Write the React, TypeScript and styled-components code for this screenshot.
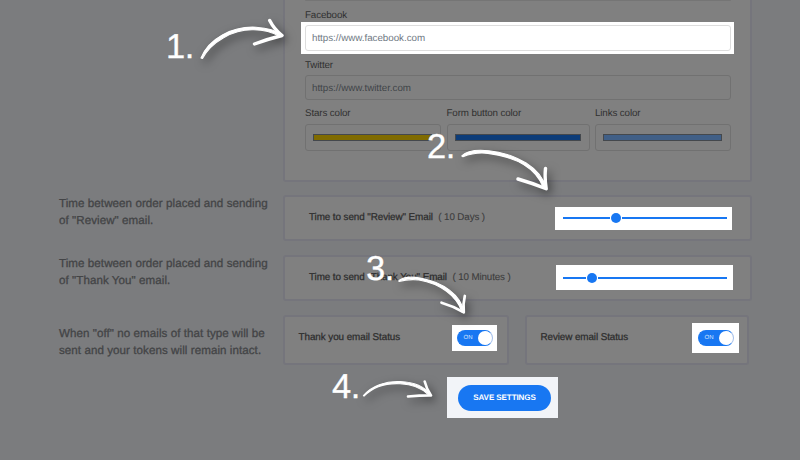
import React from 'react';
import styled, { createGlobalStyle } from 'styled-components';

const GlobalStyle = createGlobalStyle`
  * { box-sizing: border-box; }
  body {
    margin: 0;
    background: #7b7c7e;
    font-family: "Liberation Sans", Arial, Helvetica, sans-serif;
    text-rendering: geometricPrecision;
    overflow: hidden;
  }
`;

const Page = styled.main`
  position: relative;
  width: 800px;
  height: 460px;
  overflow: hidden;
  padding-left: 59px;
  display: flex;
  flex-direction: column;
  background: #7b7c7e;
`;

const SettingRow = styled.section<{ $height: number; $gap?: number }>`
  display: grid;
  grid-template-columns: 224px 469px;
  flex: none;
  height: ${(p) => p.$height}px;
  margin-bottom: ${(p) => p.$gap ?? 14}px;
`;

const Description = styled.p<{ $offset?: number }>`
  margin: ${(p) => p.$offset ?? 1}px 0 0;
  font-size: 11.6px;
  line-height: 16.6px;
  letter-spacing: 0.06px;
  white-space: nowrap;
  color: #434446;
  -webkit-text-stroke: 0.3px #434446;
`;

const Card = styled.div`
  border: 2px solid #75757c;
  border-radius: 3px;
  background: #808080;
`;

const SocialCard = styled(Card)`
  grid-column: 2;
  border-top: 0;
  border-radius: 0 0 3px 3px;
  padding: 0 19px 0 20px;
  display: flex;
  flex-direction: column;
`;

const PreviousField = styled.div`
  height: 1px;
  flex: none;
  background: #757575;
  border-radius: 0 0 3px 3px;
`;

const Label = styled.label<{ $top?: number }>`
  margin-top: ${(p) => p.$top ?? 0}px;
  height: 12px;
  flex: none;
  font-size: 9.8px;
  letter-spacing: -0.13px;
  line-height: 14px;
  white-space: nowrap;
  color: #303030;
`;

const Highlight = styled.div`
  flex: none;
  margin: 1px -3px 0 -4px;
  padding: 3px;
  background: #fff;
`;

const Field = styled.div<{ $lit?: boolean }>`
  flex: none;
  height: ${(p) => (p.$lit ? 26 : 25)}px;
  margin: ${(p) => (p.$lit ? '0 0 0 1px' : '4px 0 0')};
  padding: ${(p) => (p.$lit ? 0 : 1)}px 6px 0;
  display: flex;
  align-items: center;
  border: 1px solid ${(p) => (p.$lit ? '#dddddd' : '#717171')};
  border-radius: 3px;
  font-size: 9.8px;
  letter-spacing: -0.03px;
  color: ${(p) => (p.$lit ? '#6f7984' : '#414549')};
`;

const ColorGrid = styled.div`
  display: grid;
  grid-template-columns: 136px 143px 136px;
  column-gap: 5.5px;
  margin-top: 7px;
`;

const ColorField = styled.div`
  display: flex;
  flex-direction: column;
`;

const ColorBox = styled.div`
  height: 27px;
  margin-top: 5px;
  padding: 0 8px 0 7px;
  display: flex;
  align-items: center;
  border: 1px solid #717171;
  border-radius: 3px;
`;

const Swatch = styled.div<{ $color: string }>`
  width: 100%;
  height: 7px;
  border: 1px solid #44484d;
  background: ${(p) => p.$color};
`;

const SliderCard = styled(Card)`
  display: flex;
  align-items: center;
  padding: 0 18px 1px 24px;
`;

const Title = styled.span<{ $spacing?: number }>`
  font-size: 9.9px;
  letter-spacing: ${(p) => p.$spacing ?? -0.09}px;
  line-height: 12px;
  white-space: nowrap;
  color: #2d2d2d;
  -webkit-text-stroke: 0.25px #2d2d2d;
`;

const Amount = styled.span`
  margin-left: 5.5px;
  font-size: 9.8px;
  letter-spacing: -0.12px;
  line-height: 12px;
  white-space: nowrap;
  color: #3c3c3c;
  -webkit-text-stroke: 0.1px #3c3c3c;
`;

const SliderPanel = styled.div<{ $height: number; $inset: number; $top: number }>`
  flex: none;
  align-self: flex-start;
  width: 177px;
  height: ${(p) => p.$height}px;
  margin: ${(p) => p.$top}px ${(p) => p.$inset}px 0 auto;
  padding: ${(p) => (p.$inset < 0 ? 1 : 0)}px ${(p) => 5 - p.$inset}px ${(p) => (p.$inset < 0 ? 0 : 1)}px ${(p) => 8 + p.$inset}px;
  display: flex;
  align-items: center;
  background: #fff;
`;

const Track = styled.div<{ $before: number }>`
  width: 164px;
  display: grid;
  grid-template-columns: ${(p) => p.$before}px 12px 1fr;
  align-items: center;
`;

const Rail = styled.span`
  height: 2px;
  background: #1877f2;
`;

const Thumb = styled.span`
  width: 10px;
  height: 10px;
  margin: 0 1px;
  border-radius: 50%;
  background: #1877f2;
`;

const StatusGroup = styled.div`
  display: flex;
  gap: 16px;
`;

const StatusCard = styled(Card)<{ $width: number }>`
  width: ${(p) => p.$width}px;
  padding-left: 13.5px;
  display: flex;
  justify-content: space-between;
`;

const StatusTitle = styled(Title)`
  margin-top: 15px;
`;

const TogglePanel = styled.div<{ $w: number; $h: number; $top: number; $right: number }>`
  width: ${(p) => p.$w}px;
  height: ${(p) => p.$h}px;
  margin: ${(p) => p.$top}px ${(p) => p.$right}px 0 0;
  display: flex;
  align-items: center;
  justify-content: center;
  background: #fff;
`;

const Toggle = styled.div`
  width: 36px;
  height: 16px;
  border-radius: 8px;
  border: 1px solid #1877f2;
  border-right-color: #a5bfe9;
  display: flex;
  align-items: center;
  justify-content: space-between;
  padding-left: 6px;
  background: linear-gradient(90deg, #1877f2 78%, #9dbdf0 78%);
  color: #d8e8ff;
  font-size: 6px;
  line-height: 8px;
`;

const Knob = styled.span`
  width: 14px;
  height: 14px;
  border-radius: 50%;
  background: #fff;
`;

const SavePanel = styled.div`
  flex: none;
  width: 111px;
  height: 41px;
  margin-left: 388px;
  padding: 8px 7px 7px 11px;
  background: #f2f4f8;
`;

const SaveButton = styled.button`
  width: 93px;
  height: 26px;
  padding: 0;
  border: 0;
  border-radius: 13px;
  background: #1877f2;
  color: #fff;
  font: bold 8px/26px "Liberation Sans", Arial, sans-serif;
  letter-spacing: -0.07px;
  text-rendering: geometricPrecision;
  white-space: nowrap;
`;

const ArrowLayer = styled.svg`
  position: absolute;
  inset: 0;
  pointer-events: none;
  fill: none;
  stroke: #fff;
  stroke-linecap: round;
  stroke-linejoin: round;

  g { filter: drop-shadow(3px 4px 5px rgba(0, 0, 0, 0.5)); }
  .shaft { fill: #fff; stroke-width: 1.1px; }
`;

const StepNumber = styled.span<{ $x: number; $y: number }>`
  position: absolute;
  left: ${(p) => p.$x}px;
  top: ${(p) => p.$y}px;
  font-size: 34.5px;
  line-height: 40px;
  letter-spacing: -0.4px;
  color: #fff;
  -webkit-text-stroke: 0.3px #fff;
`;

const colors = [
  { label: 'Stars color', value: '#806b00' },
  { label: 'Form button color', value: '#0c3c79' },
  { label: 'Links color', value: '#405f87' },
];

const steps = [
  { text: '1.', x: 166, y: 27 },
  { text: '2.', x: 427, y: 127 },
  { text: '3.', x: 366, y: 249 },
  { text: '4.', x: 332, y: 367 },
];

function Slider({ before, height, inset, top }: { before: number; height: number; inset: number; top: number }) {
  return (
    <SliderPanel $height={height} $inset={inset} $top={top}>
      <Track $before={before}><Rail /><Thumb /><Rail /></Track>
    </SliderPanel>
  );
}

function Arrows() {
  return (
    <ArrowLayer width="800" height="460" viewBox="0 0 800 460">
      <g strokeWidth="3.4">
        <path className="shaft" d="M201 58 C209 38 233 26 256 27.2 C268 28 277 31 282 35 L280 36.5 C271 31.5 263 30 254 29.8 C233 29 211 42 202.5 58.5 Z" />
        <path d="M269.7 20.5 Q274 29 282 35.5 Q268 39 254.5 44" />
      </g>
      <g strokeWidth="3.4">
        <path className="shaft" d="M461.8 156 C467 150.5 478 149.5 489 150.7 C517 154 541 168 546 188 L543.5 188 C536 168 516 157 488 153.4 C478 152.3 471 153.5 463 156.7 Z" />
        <path d="M545.5 168.5 Q544.5 178 546.2 188.8 Q532 183 518 179" />
      </g>
      <g strokeWidth="2.7">
        <path className="shaft" d="M399 280.5 C404 277 413 276.7 420 278 C443 282 461 295 464 312 L462 312 C457 296 440 283.5 419 280 C411 279 406 279.5 399 281.5 Z" />
        <path d="M464.8 296 Q462.8 304 463.8 312.3 Q453 306 441.5 302.7" />
      </g>
      <g strokeWidth="2.6">
        <path className="shaft" d="M363.4 395.7 C371 386 386 380.8 400 381.5 C414 382 425 387 431 395 L429 395.3 C422 388 412 384 400 383.7 C386 383 373 387 364 396.2 Z" />
        <path d="M424.7 381.5 Q426.5 389 431 395.4 Q421 395.3 408 396.5" />
      </g>
    </ArrowLayer>
  );
}

export default function App() {
  return (
    <>
      <GlobalStyle />
      <Page>
        <SettingRow $height={182} $gap={13}>
          <SocialCard>
            <PreviousField />
            <Label $top={8}>Facebook</Label>
            <Highlight><Field $lit>https://www.facebook.com</Field></Highlight>
            <Label $top={5}>Twitter</Label>
            <Field>https://www.twitter.com</Field>
            <ColorGrid>
              {colors.map((c) => (
                <ColorField key={c.label}>
                  <Label>{c.label}</Label>
                  <ColorBox><Swatch $color={c.value} /></ColorBox>
                </ColorField>
              ))}
            </ColorGrid>
          </SocialCard>
        </SettingRow>
        <SettingRow $height={46}>
          <Description>Time between order placed and sending<br />of "Review" email.</Description>
          <SliderCard>
            <Title>Time to send "Review" Email</Title><Amount>( 10 Days )</Amount>
            <Slider before={47} height={23} inset={0} top={10} />
          </SliderCard>
        </SettingRow>
        <SettingRow $height={46}>
          <Description>Time between order placed and sending<br />of "Thank You" email.</Description>
          <SliderCard>
            <Title>Time to send "Thank You" Email</Title><Amount>( 10 Minutes )</Amount>
            <Slider before={23} height={25} inset={-1} top={8} />
          </SliderCard>
        </SettingRow>
        <SettingRow $height={50} $gap={12}>
          <Description $offset={11}>When "off" no emails of that type will be<br />sent and your tokens will remain intact.</Description>
          <StatusGroup>
            <StatusCard $width={226}>
              <StatusTitle $spacing={-0.07}>Thank you email Status</StatusTitle>
              <TogglePanel $w={45} $h={26} $top={8} $right={10}><Toggle>ON<Knob /></Toggle></TogglePanel>
            </StatusCard>
            <StatusCard $width={224}>
              <StatusTitle $spacing={-0.1}>Review email Status</StatusTitle>
              <TogglePanel $w={47} $h={30} $top={6} $right={8}><Toggle>ON<Knob /></Toggle></TogglePanel>
            </StatusCard>
          </StatusGroup>
        </SettingRow>
        <SavePanel><SaveButton>SAVE SETTINGS</SaveButton></SavePanel>
        <Arrows />
        {steps.map((s) => <StepNumber key={s.text} $x={s.x} $y={s.y}>{s.text}</StepNumber>)}
      </Page>
    </>
  );
}
